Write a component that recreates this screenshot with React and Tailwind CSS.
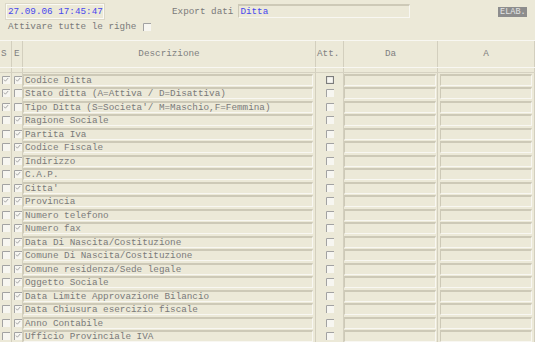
import React from "react";

const rows = [
  { d: "Codice Ditta", s: true, e: true },
  { d: "Stato ditta (A=Attiva / D=Disattiva)", s: true, e: false },
  { d: "Tipo Ditta (S=Societa'/ M=Maschio,F=Femmina)", s: true, e: false },
  { d: "Ragione Sociale", s: false, e: true },
  { d: "Partita Iva", s: false, e: true },
  { d: "Codice Fiscale", s: false, e: true },
  { d: "Indirizzo", s: false, e: true },
  { d: "C.A.P.", s: false, e: true },
  { d: "Citta'", s: false, e: true },
  { d: "Provincia", s: true, e: true },
  { d: "Numero telefono", s: false, e: true },
  { d: "Numero fax", s: false, e: true },
  { d: "Data Di Nascita/Costituzione", s: false, e: true },
  { d: "Comune Di Nascita/Costituzione", s: false, e: true },
  { d: "Comune residenza/Sede legale", s: false, e: true },
  { d: "Oggetto Sociale", s: false, e: true },
  { d: "Data Limite Approvazione Bilancio", s: false, e: true },
  { d: "Data Chiusura esercizio fiscale", s: false, e: true },
  { d: "Anno Contabile", s: false, e: true },
  { d: "Ufficio Provinciale IVA", s: false, e: true },
];

function Check({ checked, boxed }) {
  return (
    <svg width="8" height="8" viewBox="0 0 8 8" className="block">
      <rect x="0" y="0" width="8" height="8" fill="#f7f6f1" />
      {boxed ? (
        <rect x="0.5" y="0.5" width="7" height="7" fill="none" stroke="#7c7c7c" strokeWidth="1.2" />
      ) : (
        <path d="M0.5 8 V0.5 H8" fill="none" stroke="#a2a2a2" strokeWidth="1" />
      )}
      {checked && (
        <path d="M2 3.6 L3.4 5.2 L6.2 2" fill="none" stroke="#a6a6a6" strokeWidth="1" />
      )}
    </svg>
  );
}

function Field({ className = "", children }) {
  return (
    <div
      className={
        "h-[12px] border-t-2 border-l border-b border-r border-t-[#cdc9b7] border-l-[#cdc9b7] border-b-[#f8f7f2] border-r-[#f8f7f2] flex items-center overflow-hidden whitespace-nowrap " +
        className
      }
    >
      {children}
    </div>
  );
}

const cols = "grid grid-cols-[12px_11px_293px_28px_94px_97px]";
const sep = "border-r border-r-[#d3cfbe]";

export default function App() {
  return (
    <div
      className="w-[535px] h-[342px] overflow-hidden bg-[#ECE9D8] text-[#7a7a7a] text-[9.3px] leading-none"
      style={{ fontFamily: "'Liberation Mono', 'Courier New', monospace" }}
    >
      <div className="h-[40px] relative">
        <div className="flex items-start pt-[4px]">
          <div className="ml-[6px] w-[98px] h-[15px] border border-[#fbfaf5] outline outline-1 outline-[#dcd8c8] flex items-center pl-[1px] text-[#4747ee] whitespace-nowrap overflow-hidden">
            27.09.06 17:45:47
          </div>
          <div className="ml-[68px] h-[15px] flex items-center">Export dati</div>
          <div className="ml-[5px] w-[172px] h-[14px] border-t-2 border-l border-b border-r border-t-[#cdc9b7] border-l-[#cdc9b7] border-b-[#f8f7f2] border-r-[#f8f7f2] flex items-center pl-[1px] text-[#4747ee]">
            Ditta
          </div>
          <div className="ml-[88px] mt-[3px] w-[29px] h-[10px] bg-[#8d8d8d] text-[#e4e4e4] flex items-center justify-center text-[8.5px]">
            ELAB.
          </div>
        </div>
        <div className="flex items-center ml-[8px] mt-[2px] h-[12px] gap-[7px]">
          <span>Attivare tutte le righe</span>
          <Check />
        </div>
      </div>

      <div className="border-t border-t-[#f8f7f2]">
        <div className={cols + " h-[26px] text-[#808080]"}>
          <div className={sep + " flex items-center pl-[1px]"}>S</div>
          <div className={sep + " flex items-center pl-[2px]"}>E</div>
          <div className={sep + " flex items-center justify-center"}>Descrizione</div>
          <div className={sep + " flex items-center pl-[1px]"}>Att.</div>
          <div className={sep + " flex items-center justify-center"}>Da</div>
          <div className={sep + " flex items-center justify-center"}>A</div>
        </div>
        <div className={cols + " h-[6px] border-t border-t-[#f8f7f2] border-b border-b-[#d6d2c2]"}>
          <div className={sep} />
          <div className={sep} />
          <div className={sep} />
          <div className={sep} />
          <div className={sep} />
          <div className={sep} />
        </div>
        {rows.map((r, i) => (
          <div key={i} className={cols + " h-[13.5px]"}>
            <div className={sep + " flex items-center pl-[2px]"}>
              <Check checked={r.s} />
            </div>
            <div className={sep + " flex items-center pl-[2px]"}>
              <Check checked={r.e} />
            </div>
            <div className={sep + " flex items-center pr-[2px]"}>
              <Field className="w-full pl-[1px]">{r.d}</Field>
            </div>
            <div className={sep + " flex items-center justify-center"}>
              <Check boxed={i === 0} />
            </div>
            <div className={sep + " flex items-center pr-[1px]"}>
              <Field className="w-full" />
            </div>
            <div className={sep + " flex items-center pl-[2px] pr-[2px]"}>
              <Field className="w-full" />
            </div>
          </div>
        ))}
      </div>
    </div>
  );
}
